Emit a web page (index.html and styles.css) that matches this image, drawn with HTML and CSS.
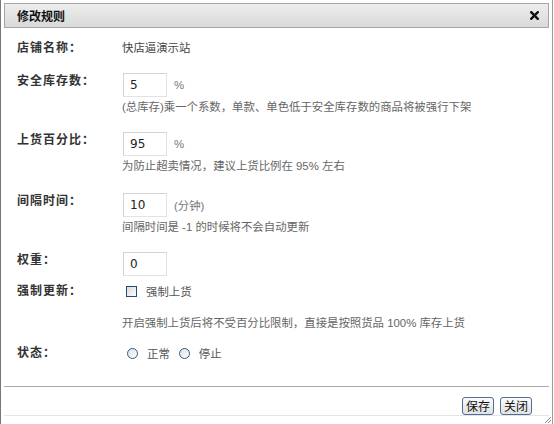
FILE: index.html
```html
<!DOCTYPE html>
<html>
<head>
<meta charset="utf-8">
<link rel="stylesheet" href="styles.css">
</head>
<body>
<div class="dialog">
  <div class="titlebar">
    <span class="title">修改规则</span>
    <span class="close"><svg width="9" height="9" viewBox="0 0 9 9"><path d="M1.2 1.2 L7.8 7.8 M7.8 1.2 L1.2 7.8" stroke="#111" stroke-width="2.4" stroke-linecap="square"/></svg></span>
  </div>
  <div class="form">
    <div class="row r1">
      <div class="label">店铺名称：</div>
      <div class="field"><span class="value">快店逼演示站</span></div>
    </div>
    <div class="row r2">
      <div class="label">安全库存数：</div>
      <div class="field">
        <div class="line"><span class="input">5</span><span class="unit">%</span></div>
        <div class="desc d2">(总库存)乘一个系数，单款、单色低于安全库存数的商品将被强行下架</div>
      </div>
    </div>
    <div class="row r3">
      <div class="label">上货百分比：</div>
      <div class="field">
        <div class="line"><span class="input">95</span><span class="unit">%</span></div>
        <div class="desc d3">为防止超卖情况，建议上货比例在 95% 左右</div>
      </div>
    </div>
    <div class="row r4">
      <div class="label">间隔时间：</div>
      <div class="field">
        <div class="line"><span class="input">10</span><span class="unit">(分钟)</span></div>
        <div class="desc d4">间隔时间是 -1 的时候将不会自动更新</div>
      </div>
    </div>
    <div class="row r5">
      <div class="label">权重：</div>
      <div class="field">
        <div class="line"><span class="input">0</span></div>
      </div>
    </div>
    <div class="row r6">
      <div class="label">强制更新：</div>
      <div class="field">
        <div class="line small"><span class="checkbox"></span><span class="opt">强制上货</span></div>
        <div class="desc d6">开启强制上货后将不受百分比限制，直接是按照货品 100% 库存上货</div>
      </div>
    </div>
    <div class="row r7">
      <div class="label">状态：</div>
      <div class="field">
        <div class="line small"><span class="radio"></span><span class="opt">正常</span><span class="radio"></span><span class="opt">停止</span></div>
      </div>
    </div>
  </div>
  <div class="footer">
    <button class="btn">保存</button>
    <button class="btn">关闭</button>
  </div>
  <svg class="grip" width="8" height="8" viewBox="0 0 8 8"><path d="M7 1 L1 7 M7 4 L4 7" stroke="#888" stroke-width="1"/></svg>
</div>
</body>
</html>
```

FILE: styles.css
```css
* { box-sizing: border-box; }
html, body { margin: 0; padding: 0; background: #fff; }
body {
  width: 554px;
  height: 424px;
  overflow: hidden;
  font-family: "Liberation Sans", "Noto Sans CJK SC", sans-serif;
  font-size: 12px;
  color: #333;
}
.dialog {
  position: relative;
  width: 553px;
  height: 424px;
  border-left: 1px solid #777;
  border-right: 1px solid #9a9a9a;
  padding: 3px 3px 0 3px;
  background: #fff;
}
.titlebar {
  height: 25px;
  width: 545px;
  border: 1px solid #a5a5a5;
  background: linear-gradient(#ededed, #d9d9d9);
  display: flex;
  align-items: center;
  justify-content: space-between;
  padding: 0 9px 0 12px;
}
.title {
  font-weight: bold;
  font-size: 12px;
  color: #111;
}
.close { display: flex; align-items: center; }
.form {
  padding-left: 13px;
  margin-top: 12px;
}
.row { display: flex; align-items: flex-start; }
.label {
  width: 105px;
  flex: none;
  font-weight: bold;
  line-height: 16px;
  letter-spacing: 1px;
  color: #333;
}
.field { display: flex; flex-direction: column; font-size: 11.4px; }
.value { line-height: 16px; color: #444; }
.line { display: flex; align-items: center; height: 24px; }
.line.small { height: 16px; }
.input {
  width: 44px;
  height: 24px;
  margin-left: 1px;
  border: 1px solid #d3d3d3;
  border-right-color: #e2e2e2;
  border-bottom-color: #e2e2e2;
  padding-left: 6px;
  line-height: 24px;
  color: #222;
  display: flex;
  align-items: center;
  font-family: "DejaVu Sans", sans-serif;
  font-size: 12px;
}
.unit { margin-left: 7px; color: #777; }
.desc { line-height: 16px; color: #666; }
.r2 { margin-top: 17px; }
.d2 { margin-top: 2px; }
.r3 { margin-top: 17px; }
.d3 { margin-top: 2px; }
.r4 { margin-top: 19px; }
.d4 { margin-top: 2px; }
.r5 { margin-top: 17px; }
.r6 { margin-top: 7px; }
.d6 { margin-top: 16px; }
.r7 { margin-top: 14px; }
.checkbox {
  width: 11px;
  height: 11px;
  margin-left: 4px;
  border: 1px solid #1f4d7a;
  background: linear-gradient(135deg, #dcdcdc, #fbfbfb);
}
.radio {
  width: 11px;
  height: 11px;
  margin-left: 5px;
  border: 1px solid #2a5a8a;
  border-radius: 50%;
  background: linear-gradient(135deg, #e0e0e0, #fdfdfd);
}
.opt { margin-left: 9px; color: #555; }
.opt + .radio { margin-left: 9px; }
.footer {
  width: 545px;
  margin-top: 25px;
  border-top: 1px solid #aaa;
  box-shadow: 0 1px 0 #e4e4e4;
  display: flex;
  justify-content: flex-end;
  gap: 6px;
  padding: 10px 17px 0 0;
}
.btn {
  height: 18px;
  padding: 0 3px;
  border: 1px solid #4d6f9c;
  border-radius: 3px;
  background: linear-gradient(#fbfbfb, #e1e1e1);
  font-family: "Noto Sans CJK SC", sans-serif;
  font-size: 12px;
  line-height: 16px;
  color: #111;
}
.grip { position: absolute; right: 0; bottom: 0; }
```
